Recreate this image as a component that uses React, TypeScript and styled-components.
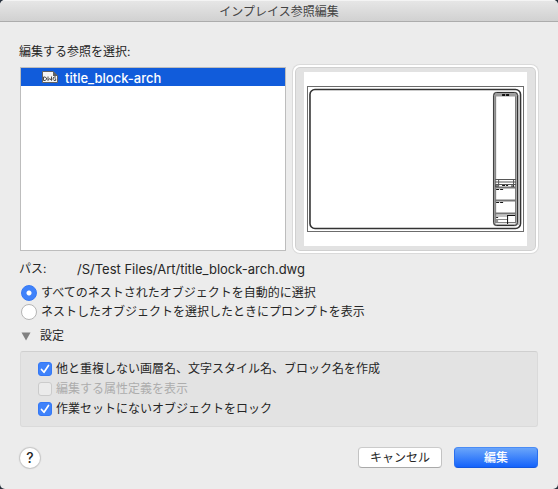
import React, { useState } from "react";
import styled, { createGlobalStyle } from "styled-components";

const GlobalStyle = createGlobalStyle`
  *, *::before, *::after { box-sizing: border-box; }
  body {
    margin: 0;
    background: #27303c;
    color: #262626;
    font: 12px/16px Inter, "Noto Sans CJK JP", sans-serif;
  }
  button, input { font: inherit; margin: 0; }
`;

const Dialog = styled.main`
  display: flex;
  flex-direction: column;
  min-height: 100vh;
  background: #ececec;
  border-radius: 5px;
  overflow: hidden;
`;

const TitleBar = styled.header`
  height: 22px;
  background: linear-gradient(#e6e6e6, #d1d1d1);
  border-top: 1px solid #f4f4f4;
  border-bottom: 1px solid #acacac;
`;

const Title = styled.h1`
  margin: 0;
  font-size: 12px;
  font-weight: 400;
  line-height: 22px;
  text-align: center;
  color: #444;
`;

const Content = styled.div`
  display: flex;
  flex-direction: column;
  padding: 22px 20px 0;
`;

const FieldLabel = styled.div`
  margin: 0 0 5px -1px;
`;

const Panes = styled.div`
  display: grid;
  grid-template-columns: 266fr 245fr;
  column-gap: 7px;
  align-items: center;
`;

const ReferenceList = styled.ul`
  height: 184px;
  margin: 0;
  padding: 0;
  list-style: none;
  background: #fff;
  border: 1px solid #bdbdbd;
`;

const ReferenceItem = styled.li`
  display: flex;
  align-items: center;
  gap: 7px;
  height: 18px;
  padding: 0 21px;
  background: #115cdb;
  color: #fff;
  font-size: 13px;
  font-weight: 500;
  line-height: 18px;
  span { padding-top: 2px; }
`;

const Preview = styled.div`
  height: 188px;
  padding: 5px 9px;
  background: #e2e2e2;
  border: 2px solid #fff;
  border-radius: 7px;
  box-shadow: 0 0 0 1px #dadada, inset 0 0 0 1px #d0d0d0;
  svg { display: block; width: 100%; height: 174px; }
`;

const PathRow = styled.dl`
  display: flex;
  margin: 8px 0 8px -1px;
  dt { width: 58px; }
  dd { margin: 0; font-size: 13px; }
`;

const Choices = styled.div`
  display: grid;
  row-gap: 3px;
  padding-left: 1px;
`;

const ChoiceLabel = styled.label<{ $muted?: boolean }>`
  display: flex;
  align-items: center;
  gap: 4px;
  height: 16px;
  line-height: 18px;
  white-space: nowrap;
  color: ${(p) => (p.$muted ? "#adadad" : "inherit")};
`;

const Radio = styled.input.attrs({ type: "radio" })`
  appearance: none;
  flex: none;
  width: 16px;
  height: 16px;
  border: 1px solid #b5b5b5;
  border-radius: 50%;
  background: #fff;
  &:checked {
    border-color: #3478f6;
    background: radial-gradient(circle, #fff 0 2px, #3f82fa 3px);
  }
`;

const Disclosure = styled.button`
  display: flex;
  align-items: center;
  align-self: flex-start;
  gap: 9px;
  margin: 8px 0 7px;
  padding: 0 1px;
  border: 0;
  background: none;
  color: inherit;
`;

const Settings = styled.section`
  display: grid;
  row-gap: 4px;
  padding: 9px 17px 9px;
  background: #e3e3e3;
  border: 1px solid #dadada;
  border-top-color: #cfcfcf;
  border-radius: 3px;
`;

const CheckWrap = styled.span`
  display: grid;
  flex: none;
  width: 14px;
  height: 14px;
  > * { grid-area: 1 / 1; }
  svg { pointer-events: none; }
`;

const Checkbox = styled.input.attrs({ type: "checkbox" })`
  appearance: none;
  width: 14px;
  height: 14px;
  border: 1px solid #b5b5b5;
  border-radius: 3px;
  background: #fff;
  &:checked { border-color: #3478f6; background: #3f82fa; }
  &:disabled { border-color: #cbcbcb; background: #ebebeb; }
  &:not(:checked) + svg { visibility: hidden; }
`;

const Footer = styled.footer`
  display: flex;
  align-items: center;
  gap: 12px;
  margin-top: 20px;
`;

const HelpButton = styled.button`
  width: 20px;
  height: 20px;
  margin: 1px auto 0 0;
  padding: 0;
  border: 0;
  border-radius: 50%;
  background: #fff;
  box-shadow: 0 0 1px 1px #c6c6c6;
  font-size: 14px;
  font-weight: 500;
  line-height: 20px;
  color: #262626;
`;

const PushButton = styled.button<{ $primary?: boolean }>`
  width: 84px;
  height: 21px;
  padding: 0;
  border: 1px solid;
  border-color: ${(p) => (p.$primary ? "#4a8cf5 #2a70f0 #1457dd" : "#cbcbcb #c3c3c3 #a9a9a9")};
  border-radius: 4px;
  background: ${(p) => (p.$primary ? "linear-gradient(#6aa5fa, #1463fb)" : "#fff")};
  color: ${(p) => (p.$primary ? "#fff" : "#262626")};
  font-weight: ${(p) => (p.$primary ? 500 : 400)};
  line-height: 18px;
`;

function DwgIcon() {
  return (
    <svg width="16" height="12" viewBox="0 0 16 12" aria-hidden="true">
      <path d="M.5 .5H11L15.500 5V11.500H.5Z" fill="#f5f5f5" stroke="#626262" />
      <path d="M11 0L16 5H11Z" fill="#626262" />
      <g fill="none" stroke="#4c4c4c">
        <path d="M1.500 6V9.500H3L4.500 8.500V7L3 6Z" />
        <path d="M6 5.500V9.500L7.750 7.500L9.500 9.500V5.500" />
        <path d="M14 6H12L11.200 7V8.700L12 9.500H13.700V7.800H12.700" />
      </g>
    </svg>
  );
}

function TitleBlockDrawing() {
  return (
    <svg viewBox="0 0 224 174" preserveAspectRatio="none" role="img" aria-label="title_block-arch">
      <rect width="224" height="174" fill="#fff" />
      <g fill="none">
        <rect x="3.500" y="14.500" width="217" height="145" stroke="#6c6c6c" />
        <rect x="6" y="17.500" width="211.500" height="139" rx="5" stroke="#333" strokeWidth="1.600" />
        <path d="M215.500 23V153" stroke="#c6c6c6" strokeWidth="2" />
        <rect x="191" y="21" width="23" height="132" rx="2.500" stroke="#aaa" strokeWidth="2.500" />
        <rect x="190.500" y="20.500" width="24" height="133" rx="3" stroke="#303030" />
        <rect x="192.500" y="23.500" width="20" height="127" stroke="#777" />
      </g>
      <path d="M192 21.500H213V24.500H192Z" fill="#9c9c9c" />
      <path d="M199 23H206" stroke="#111" strokeWidth="2" strokeDasharray="3 1" />
      <g fill="none" stroke="#555">
        <path d="M192 107.500H213M192 110H213M192 112.500H213M195.500 107V115M210.500 107V115" />
        <path d="M192 115.500H213M192 128.500H213M192 141.500H213" stroke="#777" strokeWidth="2" />
        <path d="M192 114H195M199 113.500H205M208 114H212M193 117.500H200M193 130.500H201" stroke="#111" strokeDasharray="3 1" />
        <path d="M192 144H204M192 147.500H204M192 150.500H204" stroke="#888" />
        <path d="M204.500 143V152M204 143.500H212" stroke="#111" />
        <path d="M193 145.500H195M193 149H195" stroke="#222" />
      </g>
    </svg>
  );
}

interface CheckOptionProps {
  id: string;
  label: string;
  checked?: boolean;
  disabled?: boolean;
}

function CheckOption({ id, label, checked, disabled }: CheckOptionProps) {
  return (
    <ChoiceLabel htmlFor={id} $muted={disabled}>
      <CheckWrap>
        <Checkbox id={id} defaultChecked={checked} disabled={disabled} />
        <svg viewBox="0 0 14 14" aria-hidden="true">
          <path d="M3.500 7.500L6 10.300L10.500 3.500" fill="none" stroke="#fff" strokeWidth="1.700" strokeLinecap="round" strokeLinejoin="round" />
        </svg>
      </CheckWrap>
      {label}
    </ChoiceLabel>
  );
}

export default function App() {
  const [open, setOpen] = useState(true);
  return (
    <>
      <GlobalStyle />
      <Dialog>
        <TitleBar>
          <Title>インプレイス参照編集</Title>
        </TitleBar>
        <Content>
          <FieldLabel id="references">編集する参照を選択:</FieldLabel>
          <Panes>
            <ReferenceList role="listbox" aria-labelledby="references">
              <ReferenceItem role="option" aria-selected="true">
                <DwgIcon />
                <span>title_block-arch</span>
              </ReferenceItem>
            </ReferenceList>
            <Preview>
              <TitleBlockDrawing />
            </Preview>
          </Panes>
          <PathRow>
            <dt>パス:</dt>
            <dd>/S/Test Files/Art/title_block-arch.dwg</dd>
          </PathRow>
          <Choices role="radiogroup">
            <ChoiceLabel htmlFor="auto">
              <Radio id="auto" name="nested" defaultChecked />
              すべてのネストされたオブジェクトを自動的に選択
            </ChoiceLabel>
            <ChoiceLabel htmlFor="prompt">
              <Radio id="prompt" name="nested" />
              ネストしたオブジェクトを選択したときにプロンプトを表示
            </ChoiceLabel>
          </Choices>
          <Disclosure type="button" aria-expanded={open} onClick={() => setOpen(!open)}>
            <svg width="10" height="9" viewBox="0 0 10 9" aria-hidden="true">
              <path d="M0.500 0.500H9.500L5 8.500Z" fill="#808080" />
            </svg>
            設定
          </Disclosure>
          {open && (
            <Settings>
              <CheckOption id="unique" label="他と重複しない画層名、文字スタイル名、ブロック名を作成" checked />
              <CheckOption id="attributes" label="編集する属性定義を表示" disabled />
              <CheckOption id="lock" label="作業セットにないオブジェクトをロック" checked />
            </Settings>
          )}
          <Footer>
            <HelpButton type="button" aria-label="ヘルプ">?</HelpButton>
            <PushButton type="button">キャンセル</PushButton>
            <PushButton type="button" $primary>編集</PushButton>
          </Footer>
        </Content>
      </Dialog>
    </>
  );
}
